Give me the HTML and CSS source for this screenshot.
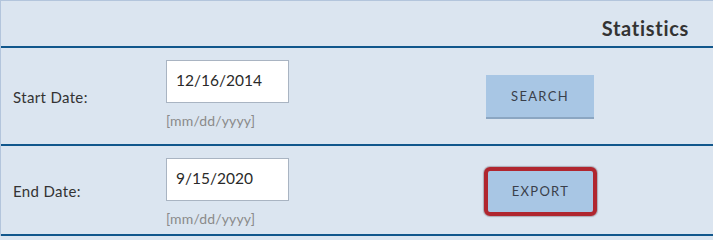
FILE: index.html
```html
<!DOCTYPE html>
<html>
<head>
<meta charset="utf-8">
<link rel="stylesheet" href="styles.css">
</head>
<body>
<div class="panel">
  <div class="header"><h2 class="title">Statistics</h2></div>
  <div class="row row-first">
    <label class="label">Start Date:</label>
    <div class="field">
      <input class="date-input" type="text" value="12/16/2014">
      <span class="hint">[mm/dd/yyyy]</span>
    </div>
    <div class="action"><button class="btn">SEARCH</button></div>
  </div>
  <div class="row row-second">
    <label class="label">End Date:</label>
    <div class="field">
      <input class="date-input" type="text" value="9/15/2020">
      <span class="hint">[mm/dd/yyyy]</span>
    </div>
    <div class="action"><button class="btn btn-focused">EXPORT</button></div>
  </div>
</div>
</body>
</html>
```
FILE: styles.css
```css
html, body {
  margin: 0;
  padding: 0;
  background: #dbe5f0;
}
.panel {
  width: 713px;
  height: 236px;
  box-sizing: border-box;
  background: #dbe5f0;
  border-top: 1px solid #b3c5dc;
  border-left: 1px solid #b3c5dc;
  font-family: "Lato", "Noto Sans", sans-serif;
  color: #333;
}
.header {
  height: 45px;
  border-bottom: 2px solid #11578c;
  display: flex;
  align-items: center;
  justify-content: flex-end;
  padding-right: 24px;
}
.title {
  margin: 0;
  font-size: 20px;
  font-weight: 700;
  color: #333;
  letter-spacing: 0.7px;
  padding-top: 8px;
}
.row {
  display: grid;
  grid-template-columns: 165px 320px 1fr;
  align-items: center;
  border-bottom: 2px solid #11578c;
}
.row-first { height: 96px; }
.row-second { height: 88px; }
.label {
  padding-left: 12px;
  font-size: 15px;
  letter-spacing: 0.35px;
  color: #333;
  padding-top: 2px;
}
.field {
  align-self: start;
  padding-top: 12px;
  display: flex;
  flex-direction: column;
  gap: 9px;
}
.date-input {
  width: 123px;
  height: 43px;
  box-sizing: border-box;
  border: 1px solid #a9b4c2;
  background: #fff;
  padding: 0 0 4px 9px;
  font-family: "Lato", "Noto Sans", sans-serif;
  font-size: 15.5px;
  color: #2a2a2a;
  outline: none;
  margin: 0;
}
.hint {
  font-size: 14px;
  letter-spacing: 0.15px;
  color: #8a8a8a;
}
.action {
  display: flex;
  padding-top: 2px;
}
.btn {
  width: 108px;
  height: 44px;
  box-sizing: border-box;
  margin: 0;
  background: #a8c6e4;
  border: none;
  border-bottom: 2px solid #8ba6c2;
  font-family: "Lato", "Noto Sans", sans-serif;
  font-size: 13px;
  letter-spacing: 1.3px;
  color: #3a3f4a;
  padding: 0;
}
.btn-focused {
  width: 113px;
  height: 49px;
  margin-left: -2px;
  border: 4px solid #b0262f;
  border-radius: 6px;
  box-shadow: 0 0 1px 1px rgba(90, 60, 70, 0.35);
}
```
